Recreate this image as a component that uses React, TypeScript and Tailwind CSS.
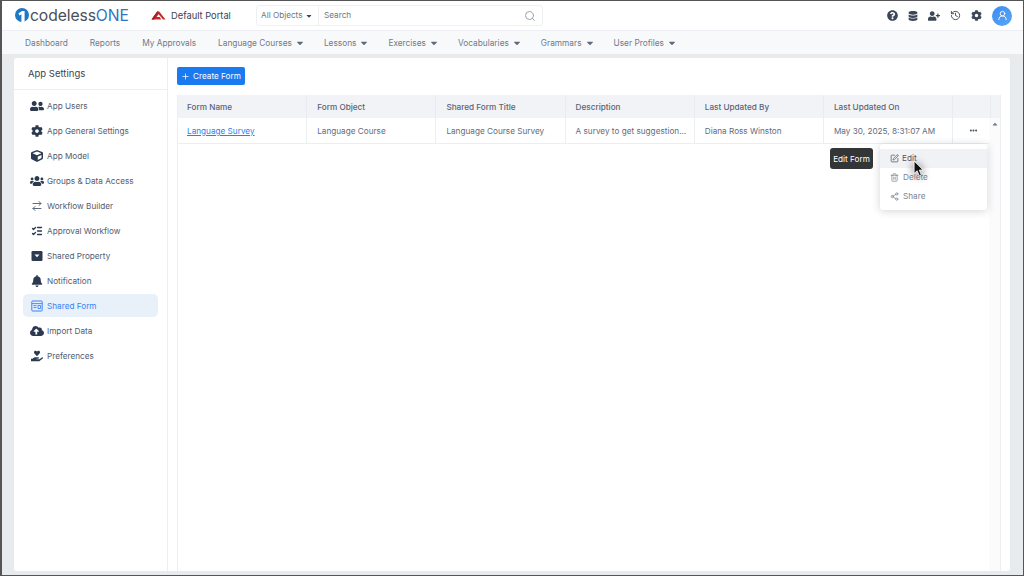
import { FaUsers, FaUserFriends, FaCog, FaCube, FaBell, FaCloudUploadAlt, FaQuestionCircle, FaDatabase, FaUserPlus, FaHandHoldingHeart, FaCaretDown, FaCaretUp } from "react-icons/fa";
import { Search, Plus, ArrowRightLeft, ListChecks, SquarePen, Trash2, Share2, History, UserRound, Ellipsis } from "lucide-react";

const topNav = [
  { label: "Dashboard" },
  { label: "Reports" },
  { label: "My Approvals" },
  { label: "Language Courses", caret: true },
  { label: "Lessons", caret: true },
  { label: "Exercises", caret: true },
  { label: "Vocabularies", caret: true },
  { label: "Grammars", caret: true },
  { label: "User Profiles", caret: true },
];

const SharedPropertyIcon = () => (
  <svg viewBox="0 0 12 12" className="w-3 h-3 text-[#2c3a50]">
    <rect x="0.5" y="1" width="11" height="10" rx="1.2" fill="currentColor" />
    <path d="M3.5 4.5h5L6 7.2z" fill="#fff" />
  </svg>
);

const SharedFormIcon = () => (
  <svg viewBox="0 0 12 12" className="w-3 h-3 text-[#3b82f6]" fill="none" stroke="currentColor">
    <rect x="0.8" y="1" width="10.4" height="10" rx="0.8" />
    <path d="M1 3.6h10M2.5 5.6h3M2.5 7.6h3M7 5.5h2.6v3H7z" strokeWidth="0.9" />
  </svg>
);

const sideItems = [
  { label: "App Users", icon: <FaUserFriends className="w-[14px] h-[14px]" /> },
  { label: "App General Settings", icon: <FaCog className="w-3 h-3" /> },
  { label: "App Model", icon: <FaCube className="w-3 h-3" /> },
  { label: "Groups & Data Access", icon: <FaUsers className="w-[14px] h-[14px]" /> },
  { label: "Workflow Builder", icon: <ArrowRightLeft className="w-3 h-3 text-[#5d6b80]" /> },
  { label: "Approval Workflow", icon: <ListChecks className="w-3 h-3" strokeWidth={2.6} /> },
  { label: "Shared Property", icon: <SharedPropertyIcon /> },
  { label: "Notification", icon: <FaBell className="w-3 h-3" /> },
  { label: "Shared Form", icon: <SharedFormIcon />, active: true },
  { label: "Import Data", icon: <FaCloudUploadAlt className="w-[14px] h-[14px]" /> },
  { label: "Preferences", icon: <FaHandHoldingHeart className="w-3 h-3" /> },
];

const columns = [
  { title: "Form Name", value: "Language Survey", pad: "pl-[9px]", link: true },
  { title: "Form Object", value: "Language Course", pad: "pl-[10px]" },
  { title: "Shared Form Title", value: "Language Course Survey", pad: "pl-[10px]" },
  { title: "Description", value: "A survey to get suggestion...", pad: "pl-[10px]" },
  { title: "Last Updated By", value: "Diana Ross Winston", pad: "pl-[10px]" },
  { title: "Last Updated On", value: "May 30, 2025, 8:31:07 AM", pad: "pl-[10px]" },
];

export default function App() {
  return (
    <div className="w-[1024px] h-[576px] overflow-hidden flex flex-col border border-l-2 border-[#555] bg-[#e8ebee] font-['Inter',sans-serif] text-[8.2px] text-[#5f6b7c]">
      {/* header */}
      <div className="h-[29px] shrink-0 flex items-center bg-white">
        <div className="flex items-center ml-[13px] w-[125px]">
          <svg viewBox="0 0 14 14" className="w-[14px] h-[14px]">
            <circle cx="7" cy="7" r="7" fill="#1f78c4" />
            <path d="M3.4 5.6 7 3h2.6v11H6.4V6.2L4.6 7.4z" fill="#fff" />
          </svg>
          <span className="ml-[1px] text-[15.7px] leading-none tracking-[-0.1px] text-[#4a5058]">codeless<span className="text-[#2f74c0]">ONE</span></span>
        </div>
        <svg viewBox="0 0 15 9" className="w-[15px] h-[9px] ml-[11px]">
          <path d="M0.5 8.5 6.2 0.5h2L14.5 8.5H12L7.6 3.2 5.6 6h3.2l1.4 2.5z" fill="#c8292b" />
          <path d="M0.5 8.5 6.2 0.5h1.2L3.2 8.5z" fill="#9d1f22" />
        </svg>
        <span className="ml-[5px] w-[85px] text-[9.3px] text-[#3b4452]">Default Portal</span>
        <div className="h-[21px] w-[287px] flex items-center rounded-[3px] border border-[#eef0f3]">
          <div className="w-[62px] h-full shrink-0 flex items-center justify-between pl-1 pr-[5px] border-r border-[#eef0f3] text-[#6b7686] whitespace-nowrap">
            All Objects
            <FaCaretDown className="w-2 h-2 text-[#3b4452]" />
          </div>
          <span className="ml-[5px] text-[#6b7686]">Search</span>
          <Search className="ml-auto mr-[6px] w-3 h-3 text-[#9aa3af]" />
        </div>
        <div className="ml-auto flex items-center text-[#3b4657]">
          <FaQuestionCircle className="w-[11px] h-[11px]" />
          <FaDatabase className="w-[10px] h-[10px] ml-[10px]" />
          <FaUserPlus className="w-3 h-3 ml-[10px]" />
          <History className="w-[11px] h-[11px] ml-[10px]" />
          <FaCog className="w-[11px] h-[11px] ml-[10px]" />
          <div className="w-5 h-5 rounded-full bg-gradient-to-br from-[#3d8bf5] to-[#5aa6f8] ml-[10px] mr-[11px] flex items-center justify-center">
            <UserRound className="w-[11px] h-[11px] text-white" />
          </div>
        </div>
      </div>

      {/* top nav */}
      <div className="h-[24px] shrink-0 flex items-center gap-[22px] pl-[23px] pt-px bg-[#f8f9fb] border-t border-[#eceef3] text-[8.3px] text-[#6f7a8a]">
        {topNav.map((n) => (
          <span key={n.label} className="flex items-center whitespace-nowrap">
            {n.label}
            {n.caret && <FaCaretDown className="w-[10px] h-[10px] ml-[3px] -mr-[3px] text-[#5f6b7c]" />}
          </span>
        ))}
      </div>

      {/* body */}
      <div className="flex-1 min-h-0 flex mt-[4px] ml-[12px] mr-[13px] mb-[4px] bg-white rounded-[3px]">
        <aside className="w-[154px] shrink-0 flex flex-col border-r border-[#eceef2]">
          <div className="h-[32px] shrink-0 flex items-center pl-[14px] pt-px text-[9.5px] text-[#3b4452] border-b border-[#eceef2]">App Settings</div>
          <div className="flex flex-col mt-[3px] px-[9px]">
            {sideItems.map((s) => (
              <div
                key={s.label}
                className={
                  s.active
                    ? "h-[23px] my-px flex items-center rounded-[5px] bg-[#e8f0fa] text-[#3b82f6]"
                    : "h-[23px] my-px flex items-center text-[#515d70]"
                }
              >
                <span className="w-[14px] ml-[7px] flex justify-center text-[#2c3a50]">{s.icon}</span>
                <span className="ml-[3px] pt-px">{s.label}</span>
              </div>
            ))}
          </div>
        </aside>

        <main className="flex-1 min-w-0 flex flex-col pl-[9px] pr-[9px] pt-[9px]">
          <button className="w-[68px] h-[18px] shrink-0 flex items-center justify-center gap-[3px] rounded-[2px] bg-[#1a7af0] text-white">
            <Plus className="w-[9px] h-[9px]" />
            Create Form
          </button>
          <div className="relative flex-1 min-h-0 mt-[10px] flex flex-col border-r border-l border-[#eceef2]">
            <div className="h-[23px] shrink-0 flex items-center bg-[#f2f3f7] font-medium text-[#5a6576]">
              {columns.map((c) => (
                <div key={c.title} className={`w-[129.2px] h-full shrink-0 flex items-center pt-px border-r border-[#e9ebf0] ${c.pad}`}>{c.title}</div>
              ))}
              <div className="w-[37.8px] h-full shrink-0 border-r border-[#e9ebf0]" />
            </div>
            <div className="flex-1 min-h-0 flex">
              <div className="flex-1 min-w-0">
                <div className="h-[26px] flex items-center border-b border-[#eceef2]">
                  {columns.map((c) => (
                    <div key={c.title} className={`w-[129.2px] h-full shrink-0 flex items-center pt-px border-r border-[#eceef2] whitespace-nowrap ${c.pad}`}>
                      {c.link ? <span className="text-[#2f80ed] underline">{c.value}</span> : c.value}
                    </div>
                  ))}
                  <div className="flex-1 flex justify-center pl-[5px] text-[#2c3a50]">
                    <Ellipsis className="w-[9px] h-[9px]" strokeWidth={3} />
                  </div>
                </div>
              </div>
              <div className="w-[11px] shrink-0 bg-[#fbfbfc] flex justify-center pt-[2px]">
                <FaCaretUp className="w-[8px] h-[8px] text-[#6b7686]" />
              </div>
            </div>

            {/* tooltip */}
            <div className="absolute left-[652px] top-[53px] w-[43px] h-[21px] flex items-center justify-center pt-px rounded-[3px] bg-[#333536] text-white whitespace-nowrap">Edit Form</div>

            {/* row menu */}
            <div className="absolute left-[702px] top-[49px] w-[107px] h-[66px] pt-[5px] rounded-[3px] bg-white shadow-[0_1px_8px_rgba(30,40,60,0.2)] text-[#7a8493]">
              <div className="h-[19px] flex items-center pl-[10px] bg-[#f1f2f6] text-[#4d5868]">
                <SquarePen className="w-[9px] h-[9px] mr-[3px]" />
                Edit
              </div>
              <div className="h-[19px] flex items-center pl-[10px]">
                <Trash2 className="w-[9px] h-[9px] mr-[4px]" />
                Delete
              </div>
              <div className="h-[19px] flex items-center pl-[10px]">
                <Share2 className="w-[9px] h-[9px] mr-[4px]" />
                Share
              </div>
            </div>

            {/* mouse pointer */}
            <svg viewBox="0 0 14 20" className="absolute left-[735px] top-[65px] w-[13px] h-[18px] drop-shadow-[0_1px_4px_rgba(0,0,0,0.6)]">
              <path d="M1 1v14l3.4-3 2.3 5.6 2.4-1-2.3-5.4H11z" fill="#111" stroke="#fff" strokeWidth="0.9" />
            </svg>
          </div>
        </main>
      </div>
    </div>
  );
}
